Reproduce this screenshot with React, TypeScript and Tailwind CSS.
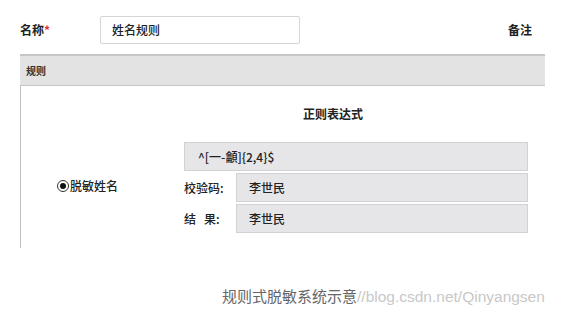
import React from 'react';

const cjk = { fontFamily: '"Noto Sans CJK SC", "Noto Sans", sans-serif' };

const Row: React.FC<{ label?: string; value: string; full?: boolean }> = ({ label, value, full }) => (
  <div className="flex items-center h-[31px]">
    {!full && <div className="w-[52px] text-[12px] text-[#222] whitespace-pre font-medium">{label}</div>}
    <div
      className={`${full ? 'pl-[13px]' : 'pl-[12px]'} flex-1 h-[29px] flex items-center bg-[#e6e6e8] border border-[#d2d2d4] text-[12px] text-[#222] font-medium`}
    >
      {value}
    </div>
  </div>
);

export default function App() {
  return (
    <div className="w-[564px] h-[314px] bg-white relative overflow-hidden" style={cjk}>
      {/* top form row */}
      <div className="flex items-center h-[28px] mt-[16px] pl-[20px]">
        <div className="w-[80px] text-[12px] font-bold text-[#222]">
          名称<span className="text-[#d33]">*</span>
        </div>
        <div className="w-[200px] h-[28px] border border-[#d6d6d6] rounded-[2px] flex items-center pl-[11px] text-[12px] text-[#222] font-medium">
          姓名规则
        </div>
        <div className="ml-[208px] text-[12px] font-bold text-[#222]">备注</div>
      </div>

      {/* rules panel */}
      <div className="ml-[20px] w-[525px] mt-[10px]">
        <div className="h-[32px] bg-[#e3e3e3] border-t-2 border-b border-[#c6c6c6] flex items-center pl-[6px] text-[10px] font-bold text-[#333]">
          规则
        </div>
        <div className="h-[162px] border-l border-[#c0c0c0] flex">
          <div className="w-[163px] pl-[36px] pt-[91px] flex items-start">
            <div className="flex items-center text-[12px] text-[#222] font-medium">
              <span className="w-[12px] h-[12px] rounded-full border border-[#333] flex items-center justify-center mr-[1px]">
                <span className="w-[6px] h-[6px] rounded-full bg-[#111]" />
              </span>
              脱敏姓名
            </div>
          </div>
          <div className="w-[344px] flex flex-col">
            <div className="h-[55px] flex items-center pl-[119px] pt-[1px] text-[12px] font-bold text-[#222]">
              正则表达式
            </div>
            <Row full value="^[一-龥]{2,4}$" />
            <Row label="校验码:" value="李世民" />
            <Row label="结   果:" value="李世民" />
          </div>
        </div>
      </div>

      {/* caption */}
      <div className="flex items-center mt-[37px] pl-[222px] whitespace-nowrap">
        <span className="text-[#666] text-[15px]">规则式脱敏系统示意</span>
        <span className="text-[#c8c8c8] text-[15.5px]" style={{ fontFamily: '"Liberation Sans", Arial, sans-serif' }}>
          //blog.csdn.net/Qinyangsen
        </span>
      </div>
    </div>
  );
}
